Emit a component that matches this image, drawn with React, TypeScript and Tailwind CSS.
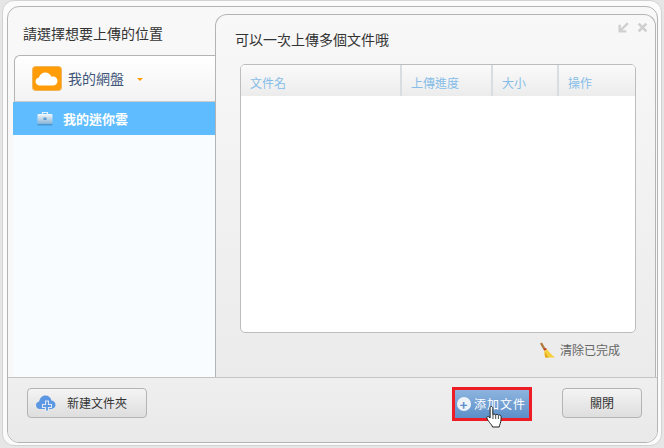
import React from 'react';

const font = { fontFamily: '"Noto Sans CJK TC", "Noto Sans CJK SC", sans-serif' };

const CloudIcon = () => (
  <svg width="30" height="25" viewBox="0 0 30 25">
    <rect x="0.5" y="0.5" width="29" height="24" rx="3" fill="#ff9c07" stroke="#f0b45c" />
    <path
      d="M8 19.5c-2.6 0-4.5-1.8-4.5-4 0-2 1.5-3.6 3.5-3.9.6-3 3.2-5 6.3-5 2.8 0 5.2 1.7 6 4.200 .6-.3 1.100-.4 1.800-.4 2.500 0 4.400 2 4.400 4.500s-1.900 4.600-4.400 4.600z"
      fill="#fff"
    />
  </svg>
);

const CaseIcon = () => (
  <svg width="16" height="15" viewBox="0 0 16 15">
    <defs>
      <linearGradient id="caseFill" x1="0" y1="0" x2="0" y2="1">
        <stop offset="0" stopColor="#f4f8fb" />
        <stop offset="1" stopColor="#86b3d6" />
      </linearGradient>
    </defs>
    <path d="M5.500 3V1.500h5V3" fill="none" stroke="#e8f2fa" strokeWidth="1.200" />
    <rect x="0.500" y="3" width="15" height="10" rx="1" fill="url(#caseFill)" />
    <rect x="0.500" y="13" width="15" height="1.500" fill="#4a96d4" />
    <rect x="6.500" y="6.500" width="3" height="2.500" fill="#5f9ccc" />
  </svg>
);

const CloudPlus = () => (
  <svg width="20" height="19" viewBox="0 0 20 19">
    <path
      d="M4 15C1.800 15 0 13.300 0 11.200 0 9.300 1.400 7.800 3.200 7.500 3.700 4.200 6 1.500 9.500 1.500c3 0 5.400 2 6 5 2.300.2 4 2 4 4.300 0 2.300-1.900 4.200-4.300 4.200z"
      fill="#5b97e2"
    />
    <path d="M11 6.500v11M6 12h10" stroke="#dfe9f5" strokeWidth="4" />
    <path d="M11 7.500v9M7 12h8" stroke="#5b97e2" strokeWidth="1.800" />
  </svg>
);

const Broom = () => (
  <svg width="17" height="17" viewBox="0 0 17 17">
    <path d="M1 1.500 3 .5l3.500 6-2 1.200z" fill="#b07a3c" />
    <path d="M4.500 7.500 7 6l1 1.300-2.700 1.500z" fill="#c8281e" />
    <path d="M5.500 8.800 8 7.300c2 2.700 4.500 5.500 8 8.200H6.500C5 13 5 11 5.500 8.800z" fill="#f5cf3c" />
    <path d="M6 15.500h4C8 13.500 7 11.500 6.500 10 6 12 6 14 6 15.500z" fill="#e5a820" />
  </svg>
);

const HandCursor = () => (
  <svg width="20" height="26" viewBox="0 0 20 26">
    <path
      d="M5 1.500c1 0 1.800.7 1.800 1.700v6.500c.3-.7 2.500-.8 2.800.2.400-.7 2.400-.7 2.800.4.500-.6 2.400-.4 2.600 1 .3 2.500 0 5-.8 7.200-.5 1.600-.9 2.700-1 3.500H6.500c-.4-1.500-1.500-2.800-3-4.500C2.500 16 1 14.300 .8 13c-.2-1.300 1.300-2 2.400-1l.9 1V3.200C4.100 2.200 4.200 1.500 5 1.500z"
      fill="#fff"
      stroke="#222"
      strokeWidth="1"
    />
    <path d="M7 10v4M9.700 10v4M12.400 10.500v3.500" stroke="#222" strokeWidth="0.800" />
  </svg>
);

const columns = [
  { label: '文件名', width: 'w-[159px]' },
  { label: '上傳進度', width: 'w-[91px]' },
  { label: '大小', width: 'w-[66px]' },
  { label: '操作', width: 'flex-1' },
];

export default function App() {
  return (
    <div className="w-[664px] h-[448px] bg-[#e6e6e6] overflow-hidden" style={font}>
      <div className="mx-[2px] h-[446px] w-[660px] rounded-[12px] border border-[#d2d2d2] bg-[#fbfbfb] pl-[4px] pt-[5px] pr-[2px] pb-[3px]">
        <div className="h-[437px] w-[651px] rounded-[12px] border border-[#b4b4b4] bg-[#f8f8f8] flex flex-col overflow-hidden">
          {/* top area */}
          <div className="h-[371px] flex border-b border-[#c4c4c4]">
            <div className="w-[207px] flex flex-col">
              <div className="h-[48px] pl-[15px] pt-[16px] text-[14px] leading-[20px] text-[#333333]">
                請選擇想要上傳的位置
              </div>
              <div className="ml-[6px] h-[47px] flex items-center rounded-tl-[6px] border-l border-t border-b border-l-[#b4b4b4] border-t-[#b4b4b4] border-b-[#cccccc] bg-gradient-to-b from-[#ffffff] to-[#f3f3f3] pl-[17px]">
                <CloudIcon />
                <span className="ml-[6px] text-[14px] text-[#3f5678]">我的網盤</span>
                <span className="ml-[13px] mt-[1px] w-0 h-0 border-x-[3px] border-t-[3px] border-x-transparent border-t-[#ff9c07]" />
              </div>
              <div className="ml-[5px] flex-1 bg-[#f8fcff]">
                <div className="h-[33px] bg-[#5fbdff] flex items-center pl-[24px]">
                  <CaseIcon />
                  <span className="ml-[10px] text-[13px] font-bold text-white">我的迷你雲</span>
                </div>
              </div>
            </div>
            <div className="relative mt-[7px] w-[441px] rounded-t-[12px] border-l border-t border-r border-[#b4b4b4] bg-gradient-to-b from-[#f8f8f8] to-[#ebebeb] flex flex-col">
              <div className="absolute right-[7px] top-[7px] flex items-center gap-[8px]">
                <svg width="11" height="11" viewBox="0 0 10 10">
                  <path d="M9 1 2.500 7.500M1.500 2.500v6h6" fill="none" stroke="#cfcfcf" strokeWidth="2.200" />
                </svg>
                <svg width="11" height="11" viewBox="0 0 10 10">
                  <path d="M1.500 1.500l7 7M8.500 1.500l-7 7" stroke="#cfcfcf" strokeWidth="2.400" />
                </svg>
              </div>
              <div className="pl-[19px] pt-[14px] text-[14px] leading-[20px] text-[#333333]">
                可以一次上傳多個文件哦
              </div>
              <div className="ml-[24px] mt-[15px] w-[396px] h-[269px] rounded-[5px] border border-[#bdbdbd] bg-white overflow-hidden">
                <div className="h-[31px] flex bg-gradient-to-b from-[#fafafa] to-[#ececec]">
                  {columns.map((col) => (
                    <div
                      key={col.label}
                      className={`${col.width} pl-[9px] first:pl-[9px] not-first:border-l-2 not-first:border-[#d8dde2] pt-[9px] text-[12px] leading-[18px] text-[#85bde8]`}
                    >
                      {col.label}
                    </div>
                  ))}
                </div>
              </div>
              <div className="mt-[8px] mr-[35px] flex items-center justify-end gap-[4px] text-[12px] leading-[18px] text-[#666666]">
                <Broom />
                <span>清除已完成</span>
              </div>
            </div>
          </div>

          {/* footer */}
          <div className="relative flex-1 bg-gradient-to-b from-[#efefef] to-[#e9e9e9] flex items-start pl-[19px] pr-[13px] pt-[10px]">
            <button className="w-[120px] h-[30px] rounded-[4px] border border-[#b4b4b4] bg-gradient-to-b from-[#f4f4f4] to-[#dedede] flex items-center pl-[8px] text-[12px] text-[#333333]">
              <CloudPlus />
              <span className="ml-[11px]">新建文件夾</span>
            </button>
            <button className="-mt-[1px] ml-[305px] w-[80px] h-[34px] border-[3px] border-[#ee1c25] bg-gradient-to-b from-[#8db4de] to-[#5c8fc9] flex items-center pl-[2px] text-[12px] text-white tracking-[1px]">
              <span className="w-[14px] h-[14px] rounded-full bg-[#eef3f9] text-[#5c8fc9] flex items-center justify-center text-[13px] font-bold leading-none">
                +
              </span>
              <span className="ml-[3px]">添加文件</span>
            </button>
            <button className="ml-[30px] w-[80px] h-[30px] rounded-[4px] border border-[#b4b4b4] bg-gradient-to-b from-[#f4f4f4] to-[#dedede] text-[12px] text-[#333333]">
              關閉
            </button>
            <div className="absolute left-[478px] top-[27px]">
              <HandCursor />
            </div>
          </div>
        </div>
      </div>
    </div>
  );
}
